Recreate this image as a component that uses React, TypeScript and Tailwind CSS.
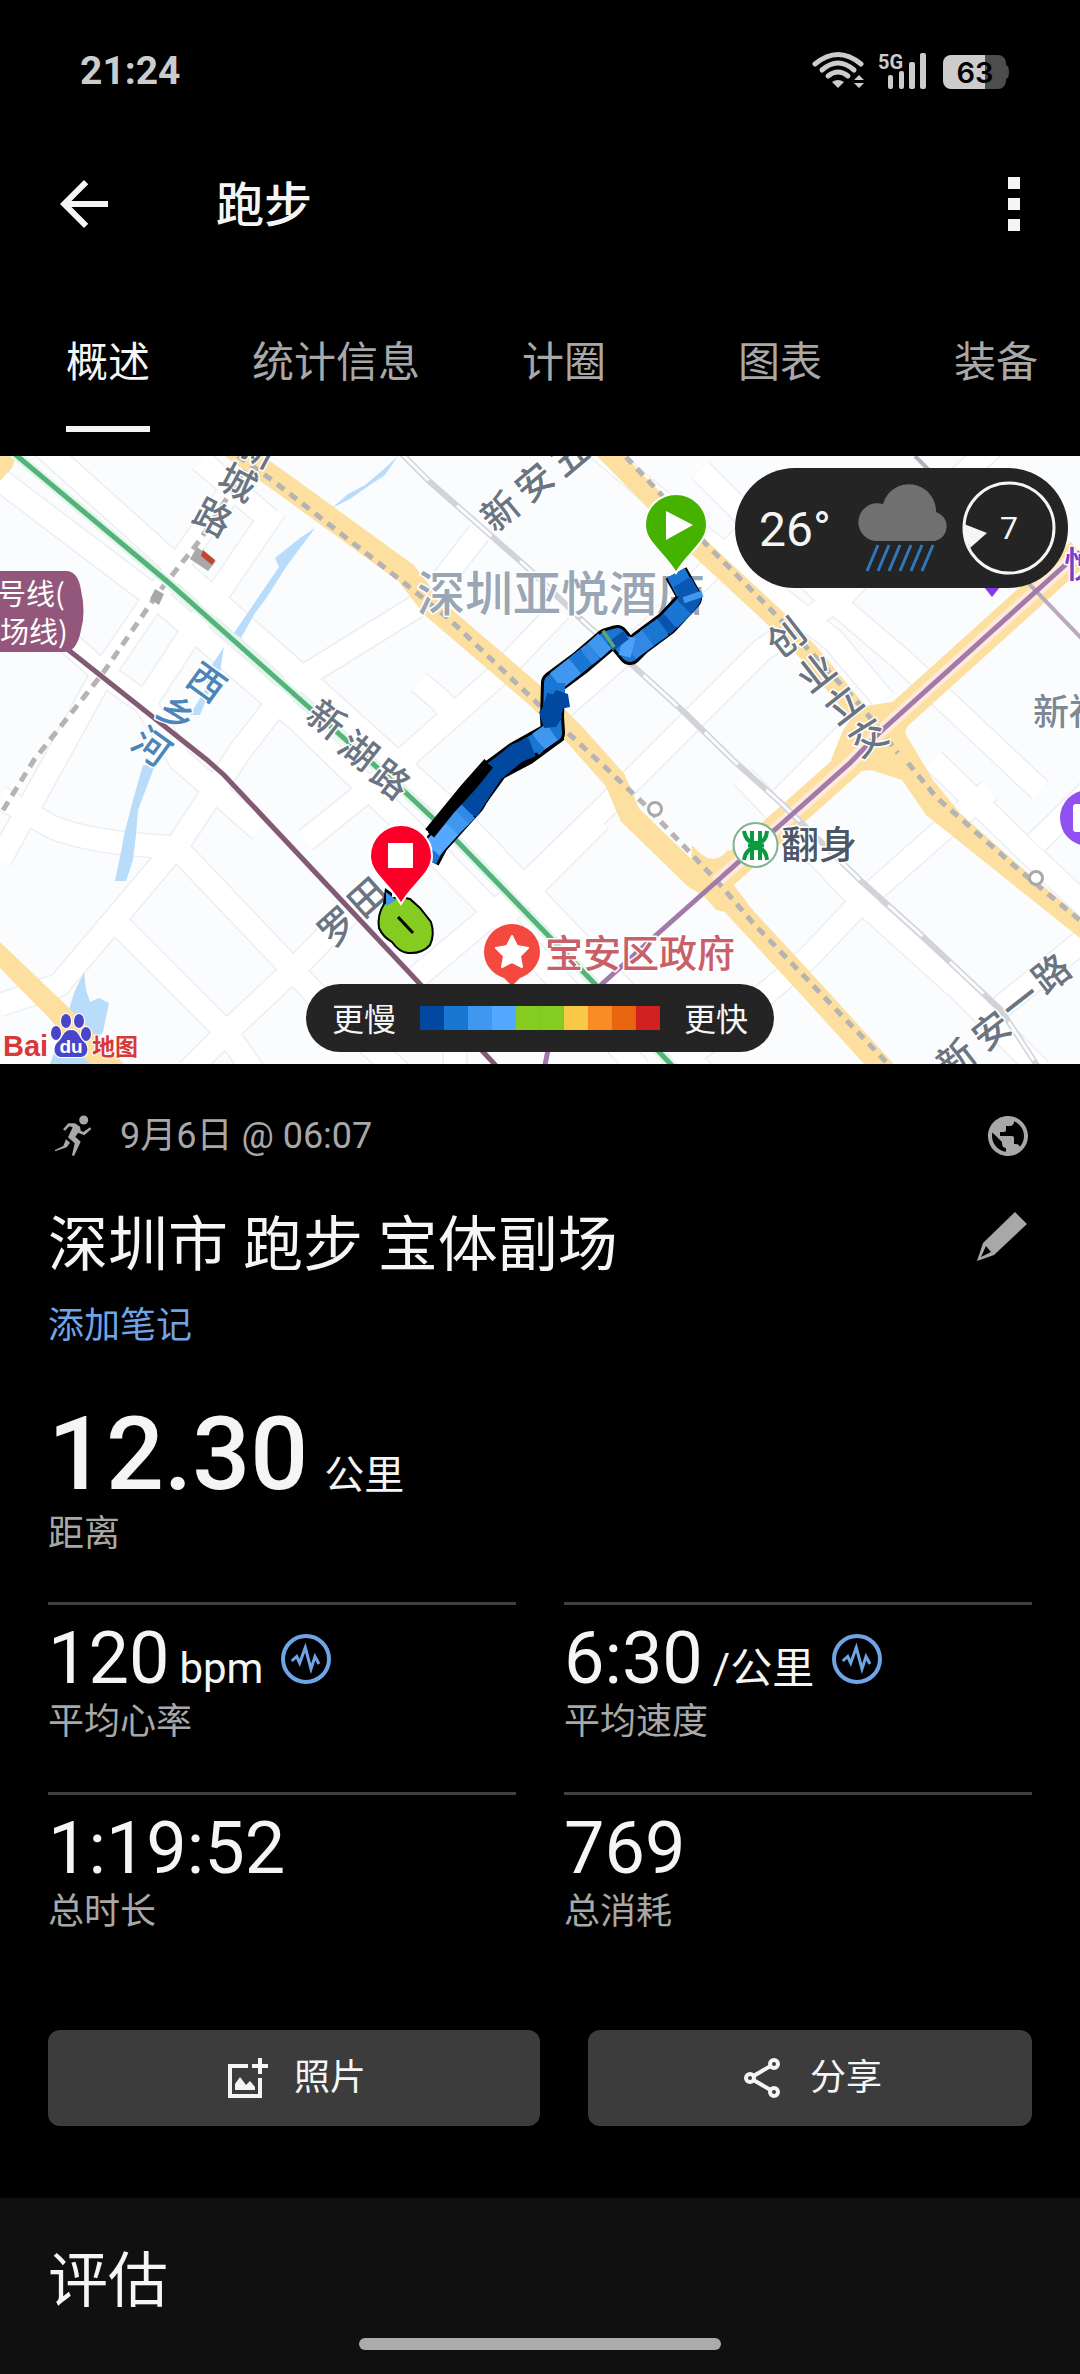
import React from "react";
import { MdArrowBack, MdPublic } from "react-icons/md";

const CJK = "Roboto, 'Noto Sans CJK SC', sans-serif";

const tabs = ["概述", "统计信息", "计圈", "图表", "装备"];

const paceColors = [
  "bg-[#0048a0]",
  "bg-[#1976d2]",
  "bg-[#4097f0]",
  "bg-[#55a8ff]",
  "bg-[#84cc20]",
  "bg-[#84cc20]",
  "bg-[#f9c846]",
  "bg-[#f98b25]",
  "bg-[#e96510]",
  "bg-[#d12020]",
];

function StatusBar() {
  return (
    <div className="flex h-[142px] items-center justify-between pl-20 pr-[70px] text-[#cccccc]">
      <span className="text-[39px] leading-none font-bold">21:24</span>
      <svg className="h-10 w-[200px]" viewBox="0 0 200 40" role="img" aria-label="Wi-Fi, 5G, 63%">
        <g fill="none" stroke="#cccccc" strokeWidth="5" strokeLinecap="round">
          <path d="M5 13Q28 -6 51 13" />
          <path d="M12 19Q28 5 44 19" />
          <path d="M18 25Q28 17 38 25" />
        </g>
        <path d="M22 31Q28 27 34 31L28 37Z" fill="#cccccc" />
        <path d="M44 29L49 24L54 29ZM44 32L49 37L54 32Z" fill="#cccccc" />
        <text x="68" y="18" fontSize="20" fill="#cccccc" fontFamily="'Roboto', sans-serif" fontWeight="700">
          5G
        </text>
        <g fill="#cccccc">
          <rect x="78" y="24" width="5" height="14" rx="2" />
          <rect x="89" y="20" width="5" height="18" rx="2" />
          <rect x="99" y="11" width="6" height="27" rx="2" />
          <rect x="110" y="2" width="6" height="36" rx="2" />
        </g>
        <path d="M174 4h14a8 8 0 0 1 8 8v2q3 1 3 7t-3 7v2a8 8 0 0 1-8 8h-14Z" fill="#4d4d4d" />
        <path d="M175 4h-34a8 8 0 0 0-8 8v18a8 8 0 0 0 8 8h34Z" fill="#cccccc" />
        <text x="165" y="32" fontSize="29" textAnchor="middle" fontFamily="Inter, sans-serif" fontWeight="600" fill="#000000">
          63
        </text>
      </svg>
    </div>
  );
}

type Mark = { c: string; x: number; y: number; r: number };

const roadChars: Mark[] = [
  { c: "新", x: 259, y: 449, r: 28 },
  { c: "城", x: 238, y: 482, r: 28 },
  { c: "路", x: 213, y: 517, r: 28 },
  { c: "新", x: 327, y: 719, r: 38 },
  { c: "湖", x: 359, y: 750, r: 38 },
  { c: "路", x: 391, y: 779, r: 38 },
  { c: "新", x: 500, y: 511, r: -40 },
  { c: "安", x: 534, y: 482, r: -40 },
  { c: "五", x: 569, y: 456, r: -40 },
  { c: "创", x: 786, y: 637, r: -38 },
  { c: "业", x: 816, y: 672, r: -38 },
  { c: "立", x: 843, y: 704, r: -38 },
  { c: "交", x: 868, y: 737, r: -32 },
  { c: "罗", x: 337, y: 926, r: -42 },
  { c: "田", x: 367, y: 897, r: -42 },
  { c: "新", x: 956, y: 1058, r: -38 },
  { c: "安", x: 991, y: 1030, r: -38 },
  { c: "一", x: 1020, y: 1001, r: -38 },
  { c: "路", x: 1051, y: 973, r: -38 },
];

const riverChars: Mark[] = [
  { c: "西", x: 207, y: 682, r: 36 },
  { c: "乡", x: 177, y: 713, r: 36 },
  { c: "河", x: 152, y: 746, r: 36 },
];

const streets = [
  "M0 408L169 560L312 686L454 814L540 903L671 1040L720 1090",
  "M0 480L169 608L300 722L440 858L540 960L640 1070",
  "M0 860L103 673L158 593L255 456",
  "M20 600L103 673L145 703L180 760L260 830",
  "M275 510L193 630L145 703",
  "M270 520L200 460",
  "M479 533L427 600L293 683L241 750L179 843L114 920L59 985L0 1005",
  "M0 797L52 827Q90 843 172 847",
  "M179 850L293 970L330 1010L420 1090",
  "M117 923L227 1033L260 1080",
  "M189 1070L227 1032L293 970L372 890",
  "M306 840L372 787L496 677L560 610",
  "M417 977L517 893L609 803L702 710L762 650L829 605",
  "M419 682L440 700L460 722",
  "M600 450L712 545L833 640L884 700",
  "M700 470L820 590L902 660L1040 790",
  "M829 610L930 505L1000 440",
  "M560 710L640 640L720 560L800 480",
  "M933 760L1029 853L1090 910",
  "M1036 843L1090 790",
  "M743 777L860 900L960 990L1040 1070",
  "M600 820L540 880L500 920",
  "M860 903L946 827L990 790",
  "M860 903L809 957L726 1027L660 1080",
  "M1001 1007L1090 935",
  "M780 800L850 730",
  "M455 1040L455 1080",
];

const rail =
  "M396 448L430 482L496 540L530 570L585 623L630 663L685 713L733 760L781 803L860 880L919 933L1001 1010L1040 1070";
const greenLine = "M10 450L169 583L312 710L406 793L454 838L540 927L595 984L680 1074";
const plumLine = "M66 648L207 760L224 775L420 984L500 1070";
const avenue = "M1080 552L1063 567L879 733L850 763L778 827L716 882";
const violetLine = "M1080 552L1063 567L879 733L850 763L778 827L716 882L654 937L602 984L550 1040L544 1070";
const routePath =
  "M676 573L690 598L667 623L640 643L630 653L617 637L607 640L580 663L553 683L552 717L553 733L517 753L490 773L473 803L437 843L428 860";

const segments: { d: string; c: string }[] = [
  { d: "M676 573L686 592", c: "#1976d2" },
  { d: "M682 582L691 598L683 609", c: "#0a58b4" },
  { d: "M692 594L694 600", c: "#4097f0" },
  { d: "M684 607L670 621", c: "#1976d2" },
  { d: "M670 621L663 627", c: "#0a52ac" },
  { d: "M663 627L646 639", c: "#1976d2" },
  { d: "M648 638L630 651", c: "#3288e4" },
  { d: "M633 648L621 645", c: "#4da0f8" },
  { d: "M621 645L615 637", c: "#0a52ac" },
  { d: "M610 638L607 640", c: "#5fa86c" },
  { d: "M605 641L594 651", c: "#4097f0" },
  { d: "M594 651L586 657", c: "#3288e4" },
  { d: "M586 657L575 666", c: "#1976d2" },
  { d: "M575 666L556 681", c: "#4097f0" },
  { d: "M555 683L555 694", c: "#1976d2" },
  { d: "M557 696L549 720", c: "#0048a0" },
  { d: "M552 732L538 742", c: "#4097f0" },
  { d: "M538 742L532 748", c: "#1976d2" },
  { d: "M532 747L517 753L494 772L482 790L468 812", c: "#0048a0" },
  { d: "M468 811L461 818", c: "#3288e4" },
  { d: "M462 817L450 829", c: "#4097f0" },
  { d: "M451 828L432 849", c: "#55a8ff" },
];

function MapDrawing() {
  return (
    <svg
      className="block h-full w-full"
      viewBox="0 456 1080 608"
      preserveAspectRatio="xMidYMid slice"
      role="img"
      aria-label="跑步路线地图"
      fontFamily="'Noto Sans CJK SC', sans-serif"
    >
      <rect x="-600" y="456" width="2280" height="608" fill="#fafcfe" />
      <g fill="none" stroke="#eceef2" strokeWidth="25" strokeLinejoin="round">
        {streets.map((d) => (
          <path key={d} d={d} />
        ))}
      </g>
      <g fill="none" stroke="#ffffff" strokeWidth="22" strokeLinejoin="round">
        {streets.map((d) => (
          <path key={d} d={d} />
        ))}
      </g>

      <g fill="#b9dcfb">
        <path d="M398 456L383 470L365 485L348 494L332 508L350 499L367 487L385 475Z" />
        <path d="M315 528L300 538L275 558L279 567L251 608L234 633L241 638L255 613L265 600L286 567Z" />
        <path d="M224 647L213 663L205 690L190 715L200 715L212 685L220 672Z" />
        <path d="M143 765L155 765L138 810L136 835L133 860L126 881L115 881L122 847L124 835L133 800Z" />
        <path d="M84 972L74 993L66 1020L50 1064H91L90 1047L103 1032L109 1003L99 998L90 1002L86 990Z" />
      </g>

      <g fill="#fde0a0">
        <path d="M0 456H16L12 468L0 481Z" />
        <path d="M0 942L69 1008L124 1064H90L48 1017L0 968Z" />
        <path d="M831 760L843 730L860 707L905 700L912 713L905 733L933 780L960 813L1022 868L1080 917V938L926 815L902 780L871 770L850 772Z" />
        <path d="M692 845Q712 870 728 850L742 862L730 880L760 920L716 910L690 880Z" />
      </g>
      <g fill="none" stroke="#fde0a0">
        <path d="M232 448L282 483L406 573L432 607L537 697L575 735L615 780L630 815L695 878L722 893L809 987L888 1074" strokeWidth="22" />
        <path d="M603 448L654 500L702 550L774 617L809 653L860 715" strokeWidth="20" />
        <path d={avenue} strokeWidth="28" />
      </g>
      <path d={avenue} fill="none" stroke="#fdeadb" strokeWidth="13" />

      <g fill="none" stroke="#b5b3b3" strokeWidth="5">
        <path
          d="M238 456L272 480L403 582L448 618L534 700L568 733L605 767L643 803L716 880L753 923L805 977L890 1066"
          strokeDasharray="9 7"
        />
        <path d="M626 457L657 490L705 543L778 617L860 705L898 753" strokeDasharray="9 7" />
        <path d="M908 763L936 797L1019 870L1082 922" strokeDasharray="9 7" />
        <path d="M245 470L200 540L158 593L103 673L34 760L0 815" strokeDasharray="10 7" />
      </g>

      <path d={rail} fill="none" stroke="#d2d3d9" strokeWidth="6" />
      <path d={rail} fill="none" stroke="#fafcfe" strokeWidth="3" strokeDasharray="46 38" />
      <path d="M915 456L926 467L1032 587L1085 642" fill="none" stroke="#bba9bd" strokeWidth="4" />
      <path d={greenLine} fill="none" stroke="#e2f6e9" strokeWidth="10" />
      <path d={greenLine} fill="none" stroke="#54b37a" strokeWidth="5" />
      <path d={plumLine} fill="none" stroke="#825a74" strokeWidth="5" />
      <path d={violetLine} fill="none" stroke="#a279a9" strokeWidth="5" />

      <path d="M197 547L216 561L208 571L190 559Z" fill="#aaa7a8" />
      <path d="M203 550L215 560L212 565L201 556Z" fill="#c1462f" />
      <path d="M155 589L164 594L159 605L150 599Z" fill="#aaa7a8" />

      <circle cx="655" cy="809" r="6.5" fill="#ffffff" stroke="#a9a9ab" strokeWidth="3" />
      <circle cx="1036" cy="878" r="6.5" fill="#ffffff" stroke="#a9a9ab" strokeWidth="3" />

      <g stroke="#ffffff" strokeWidth="3" strokeLinejoin="round" paintOrder="stroke" fontSize="37" fontWeight="500">
        <g textAnchor="middle" fill="#6a7482">
          {roadChars.map((m, i) => (
            <text key={i} x={m.x} y={m.y + 14} transform={`rotate(${m.r} ${m.x} ${m.y})`}>
              {m.c}
            </text>
          ))}
        </g>
        <g textAnchor="middle" fill="#4b86b8">
          {riverChars.map((m, i) => (
            <text key={i} x={m.x} y={m.y + 14} transform={`rotate(${m.r} ${m.x} ${m.y})`}>
              {m.c}
            </text>
          ))}
        </g>
        <text x="417" y="611" fontSize="48" fill="#98a6b5">深圳亚悦酒店</text>
        <text x="781" y="858" fontSize="38" fill="#4c5666">翻身</text>
        <text x="545" y="967" fontSize="38" fill="#c8606a">宝安区政府</text>
        <text x="1033" y="725" fontSize="36" fill="#7c8896">新福</text>
        <text x="1064" y="578" fontSize="36" fill="#7a3fc4">悦</text>
      </g>
      <path d="M984 587H1000L992 597Z" fill="#8438e8" />

      <path d="M-20 571H66Q78 571 81 590Q86 612 81 630Q77 652 64 652H-20Z" fill="#94577c" />
      <g fill="#ffffff" fontSize="29">
        <text x="-3" y="605">号线(</text>
        <text x="0" y="643">场线)</text>
      </g>

      <circle cx="755.5" cy="845" r="22" fill="#ffffff" stroke="#7fb393" strokeWidth="2" />
      <g fill="none" stroke="#0a9a41" strokeWidth="4">
        <path d="M744 831Q746 843 756 843Q766 843 767 831" />
        <path d="M744 860Q746 848 756 848Q766 848 767 860" />
        <path d="M752 831V860M760 831V860M748 845.5H764" />
      </g>

      <path d="M512 924a28 28 0 0 1 28 28c0 12-9 22-20 26l-8 8-8-8c-12-4-20-14-20-26a28 28 0 0 1 28-28Z" fill="#f3493f" />
      <path
        d="M512 936L517 946L528 948L520 956L522 967L512 962L502 967L504 956L496 948L507 946Z"
        fill="#ffffff"
        stroke="#ffffff"
        strokeWidth="2"
        strokeLinejoin="round"
      />
      <circle cx="1088" cy="818" r="28" fill="#9150f2" />
      <rect x="1073" y="804" width="20" height="28" rx="3" fill="#ffffff" />

      <path d={routePath} fill="none" stroke="#000000" strokeWidth="24" strokeLinejoin="round" />
      <path d="M559 716L560 738L530 760L502 775L484 800" fill="none" stroke="#000000" strokeWidth="8" />
      <path d="M490 764L466 791L431 834" fill="none" stroke="#000000" strokeWidth="15" />
      <path d={routePath} fill="none" stroke="#1976d2" strokeWidth="18" strokeLinejoin="round" />
      <g fill="none" strokeWidth="20" strokeLinejoin="round">
        {segments.map((s) => (
          <path key={s.d} d={s.d} stroke={s.c} />
        ))}
      </g>
      <path d="M490 765L474 785L451 810L431 835" fill="none" stroke="#000000" strokeWidth="8" />
      <path d="M556 690L568 694L570 707L560 709L562 718L556 727L544 728L539 712L548 702Z" fill="#0048a0" />

      <path d="M385 888L392 893L392 915L382 912Z" fill="#000000" />
      <path
        d="M384 904Q377 915 379 928Q383 937 392 942Q399 952 408 953Q422 954 430 945Q435 934 431 922L420 908L410 899Q393 894 384 904Z"
        fill="#84cc20"
        stroke="#000000"
        strokeWidth="2"
      />
      <path d="M386 892L396 900L386 906Z" fill="#4097f0" />
      <path d="M398 917L413 933" stroke="#000000" strokeWidth="3" />

      <g stroke="#ffffff" strokeWidth="2">
        <path d="M676 494a31 31 0 0 1 31 31c0 18-19 27-31 48-12-21-31-30-31-48a31 31 0 0 1 31-31Z" fill="#45b200" />
        <path d="M401 825a31 31 0 0 1 31 31c0 18-19 27-31 48-12-21-31-30-31-48a31 31 0 0 1 31-31Z" fill="#fa0028" />
      </g>
      <path d="M666 511L693 525L666 540Z" fill="#ffffff" />
      <rect x="388" y="843" width="25" height="25" fill="#ffffff" />

      <g stroke="#ffffff" strokeWidth="2" paintOrder="stroke">
        <text x="3" y="1056" fontSize="29" fontWeight="700" fontFamily="'Liberation Sans', sans-serif" fill="#d8383a">Bai</text>
        <text x="92" y="1055" fontSize="23" fontWeight="700" fill="#d8383a">地图</text>
        <g fill="#4a44c8">
          <ellipse cx="66" cy="1021" rx="5" ry="7" />
          <ellipse cx="79" cy="1021" rx="5" ry="7" />
          <ellipse cx="56" cy="1033" rx="5" ry="7" />
          <ellipse cx="86" cy="1034" rx="5" ry="7" />
          <path d="M71 1030c8 0 8 8 13 12s5 15-4 15H62c-9 0-9-11-4-15s5-12 13-12Z" />
        </g>
      </g>
      <text x="71" y="1053" fontSize="19" textAnchor="middle" fontWeight="700" fontFamily="'Liberation Sans', sans-serif" fill="#ffffff">
        du
      </text>
    </svg>
  );
}

function WeatherPill() {
  return (
    <div className="absolute top-3 right-3 flex h-[120px] w-[333px] items-center rounded-full bg-[#242424] pl-6 text-[#f5f5f5]">
      <span className="w-[93px] pt-1 text-[48px] leading-none">26°</span>
      <svg className="h-[90px] w-[98px]" viewBox="0 0 98 90" aria-hidden="true">
        <path d="M23 58a19 19 0 1 1 8-37a27 27 0 0 1 53 8a15 15 0 0 1-1 29Z" fill="#707070" />
        <path d="M26 62L15 88M37 62L26 88M48 62L37 88M59 62L48 88M70 62L59 88M81 62L70 88" stroke="#2f78bd" strokeWidth="3" />
      </svg>
      <div className="relative ml-3 flex size-[94px] items-center justify-center">
        <svg className="absolute inset-0 size-full" viewBox="0 0 94 94" aria-hidden="true">
          <circle cx="47" cy="47" r="45" fill="none" stroke="#f5f5f5" strokeWidth="3" />
          <path d="M2 43L25 52L8 67Q2 56 2 43Z" fill="#f5f5f5" />
        </svg>
        <span className="text-[32px] leading-none">7</span>
      </div>
    </div>
  );
}

function Legend() {
  return (
    <div className="absolute bottom-3 left-1/2 flex h-[68px] -translate-x-1/2 items-center gap-6 rounded-full bg-[#242424] px-[26px] text-[32px] leading-[36px] whitespace-nowrap text-[#f5f5f5]">
      <span className="pt-1">更慢</span>
      <span className="flex">
        {paceColors.map((c, i) => (
          <i key={i} className={`block size-6 ${c}`} />
        ))}
      </span>
      <span className="pt-1">更快</span>
    </div>
  );
}

function Runner() {
  return (
    <svg className="size-12 shrink-0" viewBox="0 0 48 48" fill="#a8a8a8" aria-hidden="true">
      <circle cx="35.7" cy="8" r="4.5" />
      <path d="M20.3 11.3H27L32 14.7L32.7 18.7L35.3 20L42 15.3L43.3 17L36.3 23.3L30.3 20.7L27.3 24.7L32.7 29.7L26 44L24 43.3L26.7 31.3L20 25.3L24.7 15.3L21.3 14.3L17 18.7L15 17.3Z" />
      <path d="M18 27.3L22 30.7L18.7 35.3L7 39.3V38L15.3 34Z" />
    </svg>
  );
}

function Pulse() {
  return (
    <svg className="size-[50px]" viewBox="0 0 50 50" fill="none" stroke="#6fa5e6" aria-hidden="true">
      <circle cx="25" cy="25" r="23" strokeWidth="4" />
      <path d="M10.7 27L15.7 22.5L18.7 29L24.3 13.5L30 35L34 22.5L38 30" strokeWidth="3" />
    </svg>
  );
}

function Stat({ value, unit, label, pulse }: { value: string; unit?: string; label: string; pulse?: boolean }) {
  return (
    <div className="border-t-[3px] border-[#3f3f3f] pt-[14px] pb-12">
      <div className="flex h-20 items-center">
        <p className="text-[72px] leading-[80px] whitespace-nowrap">
          {value}
          {unit && <span className="ml-2.5 text-[42px] leading-none">{unit}</span>}
        </p>
        {pulse && (
          <button type="button" aria-label={`${label}图表`} className="ml-[18px]">
            <Pulse />
          </button>
        )}
      </div>
      <p className="pt-px text-[36px] leading-[44px] text-[#a8a8a8]">{label}</p>
    </div>
  );
}

export default function App() {
  return (
    <div className="w-full overflow-hidden bg-black text-[#f5f5f5]" style={{ fontFamily: CJK }}>
      <StatusBar />
      <header className="flex h-[124px] items-center pr-[60px] pl-12">
        <button type="button" aria-label="返回">
          <MdArrowBack className="size-[72px]" />
        </button>
        <h1 className="ml-24 flex-1 pt-1 text-[48px] leading-none font-medium">跑步</h1>
        <button type="button" aria-label="更多选项" className="flex flex-col gap-[9px]">
          <i className="block size-3 bg-[#f5f5f5]" />
          <i className="block size-3 bg-[#f5f5f5]" />
          <i className="block size-3 bg-[#f5f5f5]" />
        </button>
      </header>

      <nav className="flex pt-8 pb-6">
        {tabs.map((t, i) => (
          <button key={t} type="button" className="flex min-w-[216px] shrink-0 justify-center px-9 text-[42px]">
            <span
              className={
                i === 0
                  ? "border-b-[6px] border-[#f5f5f5] pt-0.5 leading-[126px]"
                  : "border-b-[6px] border-transparent pt-0.5 leading-[126px] text-[#a8a8a8]"
              }
            >
              {t}
            </span>
          </button>
        ))}
      </nav>

      <section className="relative h-[608px] overflow-hidden">
        <MapDrawing />
        <WeatherPill />
        <Legend />
      </section>

      <main className="px-12 pt-12">
        <div className="flex h-12 items-center text-[#a8a8a8]">
          <Runner />
          <p className="ml-6 flex-1 text-[36px] leading-[48px]">9月6日 @ 06:07</p>
          <MdPublic className="size-12" />
        </div>
        <div className="mt-12 flex justify-between">
          <h2 className="pt-0.5 text-[60px] leading-[72px]">深圳市 跑步 宝体副场</h2>
          <button type="button" aria-label="编辑" className="mt-1 self-start">
            <svg className="size-[60px]" viewBox="0 0 60 60" fill="#a8a8a8" aria-hidden="true">
              <path fillRule="evenodd" d="M43 0L55 12L22 43L5 49L11 31ZM14 34L9 45L19 40Z" />
            </svg>
          </button>
        </div>
        <a href="#note" className="mt-5 block text-[36px] leading-[48px] text-[#6fa5e6]">
          添加笔记
        </a>
        <p className="mt-12 text-[102px] leading-[112px] font-medium">
          12.30<span className="ml-4 text-[40px] leading-none font-normal">公里</span>
        </p>
        <p className="text-[36px] leading-[48px] text-[#a8a8a8]">距离</p>

        <div className="mt-11 grid grid-cols-2 gap-x-12">
          <Stat value="120" unit="bpm" label="平均心率" pulse />
          <Stat value="6:30" unit="/公里" label="平均速度" pulse />
          <Stat value="1:19:52" label="总时长" />
          <Stat value="769" label="总消耗" />
        </div>

        <div className="mt-12 grid grid-cols-[41fr_37fr] gap-12 text-[36px] leading-[48px]">
          <button type="button" className="flex h-24 items-center justify-center gap-6 rounded-xl bg-[#3c3c3c]">
            <svg className="size-12" viewBox="0 0 48 48" fill="none" aria-hidden="true">
              <path d="M26 12H8V42H38V24" stroke="#f5f5f5" strokeWidth="4" />
              <path d="M38 4V20M30 12H46" stroke="#f5f5f5" strokeWidth="4" />
              <path d="M13 36V30L18 23L24 31L28 27L33 33V36Z" fill="#f5f5f5" />
            </svg>
            照片
          </button>
          <button type="button" className="flex h-24 items-center justify-center gap-6 rounded-xl bg-[#3c3c3c]">
            <svg className="size-12" viewBox="0 0 48 48" fill="none" stroke="#f5f5f5" strokeWidth="4" aria-hidden="true">
              <path d="M12 24L36 10M12 24L36 38" />
              <g fill="#3c3c3c">
                <circle cx="12" cy="24" r="4" />
                <circle cx="36" cy="10" r="4" />
                <circle cx="36" cy="38" r="4" />
              </g>
            </svg>
            分享
          </button>
        </div>
      </main>

      <section className="mt-[72px] bg-[#101010] px-12 pt-12 pb-6">
        <h2 className="text-[60px] leading-[72px]">评估</h2>
        <div className="mx-auto mt-5 h-3 w-[362px] rounded-full bg-[#ababab]" />
      </section>
    </div>
  );
}
